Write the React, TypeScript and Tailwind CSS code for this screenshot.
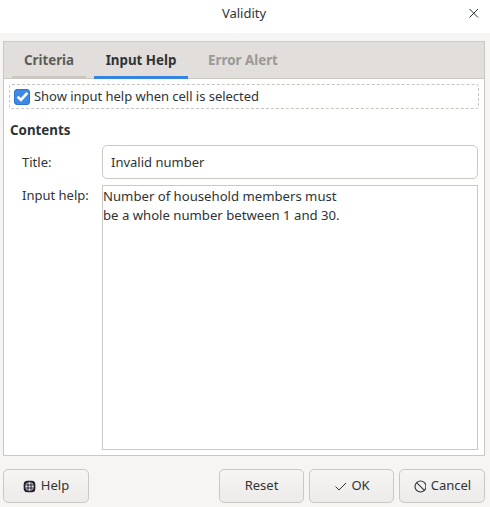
import React from 'react';

const tabs = [
  { label: 'Criteria', cls: 'w-[74px] text-[#5e5c5a] border-[#cdc7c2]' },
  { label: 'Input Help', cls: 'w-[94px] text-[#2e3436] border-[#3584e4]' },
  { label: 'Error Alert', cls: 'w-[94px] text-[#9a9996] border-transparent' },
];

function FooterButton({ icon, label, width }: { icon?: React.ReactNode; label: string; width: string }) {
  return (
    <button className={`${width} h-[34px] flex items-center justify-center gap-[5px] rounded-[5px] border border-[#cdc7c2] bg-gradient-to-b from-[#f6f5f4] to-[#edebe9] text-[13px] text-[#2e3436]`}>
      {icon}
      <span>{label}</span>
    </button>
  );
}

export default function App() {
  return (
    <div className="w-[490px] h-[507px] bg-[#f6f5f4] font-['Noto_Sans',sans-serif] text-[#2e3436] flex flex-col overflow-hidden">
      {/* title bar */}
      <div className="h-[33px] shrink-0 bg-white flex items-center relative pb-[6px] pr-[2px]">
        <div className="w-full text-center text-[13px]">Validity</div>
        <svg className="absolute left-[468px] top-[7px]" width="12" height="12" viewBox="0 0 12 12" fill="none" stroke="#2e3436" strokeWidth="1">
          <path d="M1.5 2 L10 10.5 M10 2 L1.5 10.5" />
        </svg>
      </div>

      {/* notebook */}
      <div className="ml-[3px] mt-[8px] w-[482px] h-[415px] shrink-0 border border-[#cdc7c2] bg-white flex flex-col">
        <div className="h-[37px] shrink-0 bg-[#e1dedb] border-b border-[#cdc7c2] flex items-stretch pl-[8px] gap-[8px]">
          {tabs.map(t => (
            <div key={t.label} className={`${t.cls} -mb-px border-b-[3px] flex items-center justify-center font-bold text-[13.33px] pt-[3px]`}>
              {t.label}
            </div>
          ))}
        </div>

        <div className="flex-1 flex flex-col px-[6px] pt-[5px] pb-[5px]">
          <div className="h-[25px] -ml-px w-[470px] shrink-0 border border-dashed border-[#c8c5c1] rounded-[3px] flex items-center pl-[4px] gap-[4px]">
            <div className="w-[16px] h-[16px] rounded-[3px] bg-[#3d8ae6] border border-[#2a76d2] flex items-center justify-center">
              <svg width="13" height="13" viewBox="0 0 12 12" fill="none" stroke="white" strokeWidth="2.4">
                <path d="M1.5 6.2 L4.6 9.2 L10.5 2.6" />
              </svg>
            </div>
            <span className="text-[13px] tracking-[-0.03px] leading-none">Show input help when cell is selected</span>
          </div>

          <div className="mt-[11px] h-[20px] font-bold text-[13.33px] leading-[20px]">Contents</div>

          <div className="mt-[5px] flex items-center">
            <div className="w-[92px] pl-[12px] pt-[1px] text-[13px]">Title:</div>
            <div className="h-[34px] w-[376px] border border-[#cdc7c2] rounded-[5px] flex items-center pl-[8px] pt-[1px] text-[13px]">Invalid number</div>
          </div>

          <div className="mt-[6px] flex flex-1 items-start">
            <div className="w-[92px] pl-[12px] text-[13px] leading-[20px]">Input help:</div>
            <div className="w-[376px] h-[265px] border border-[#cdc7c2] text-[13.15px] leading-[19px]">
              <div className="pt-[1px]">Number of household members must</div>
              <div>be a whole number between 1 and 30.</div>
            </div>
          </div>
        </div>
      </div>

      {/* footer buttons */}
      <div className="mt-[13px] ml-[3px] w-[482px] flex items-center">
        <FooterButton
          width="w-[86px]"
          label="Help"
          icon={
            <svg width="13" height="13" viewBox="0 0 13 13" fill="none" stroke="#241f31" strokeWidth="1.7">
              <rect x="1.5" y="1.5" width="10" height="10" rx="3" />
              <path d="M5 1 V12 M8 1 V12 M1 5 H12 M1 8 H12" strokeWidth="1" />
              <path d="M2 2 L3.5 3.5 M11 2 L9.5 3.5 M2 11 L3.5 9.5 M11 11 L9.5 9.5" strokeWidth="2.4" />
            </svg>
          }
        />
        <div className="flex-1" />
        <div className="flex gap-[5px]">
          <FooterButton width="w-[85px]" label="Reset" />
          <FooterButton
            width="w-[85px]"
            label="OK"
            icon={
              <svg width="13" height="13" viewBox="0 0 13 13" fill="none" stroke="#2e3436" strokeWidth="1">
                <path d="M2.5 6.5 L6 10 L13 3" />
              </svg>
            }
          />
          <FooterButton
            width="w-[86px]"
            label="Cancel"
            icon={
              <svg width="13" height="13" viewBox="0 0 13 13" fill="none" stroke="#2e3436" strokeWidth="1.1">
                <circle cx="7.5" cy="6.5" r="5.5" />
                <path d="M3.6 2.6 L11.4 10.4" />
              </svg>
            }
          />
        </div>
      </div>
    </div>
  );
}
